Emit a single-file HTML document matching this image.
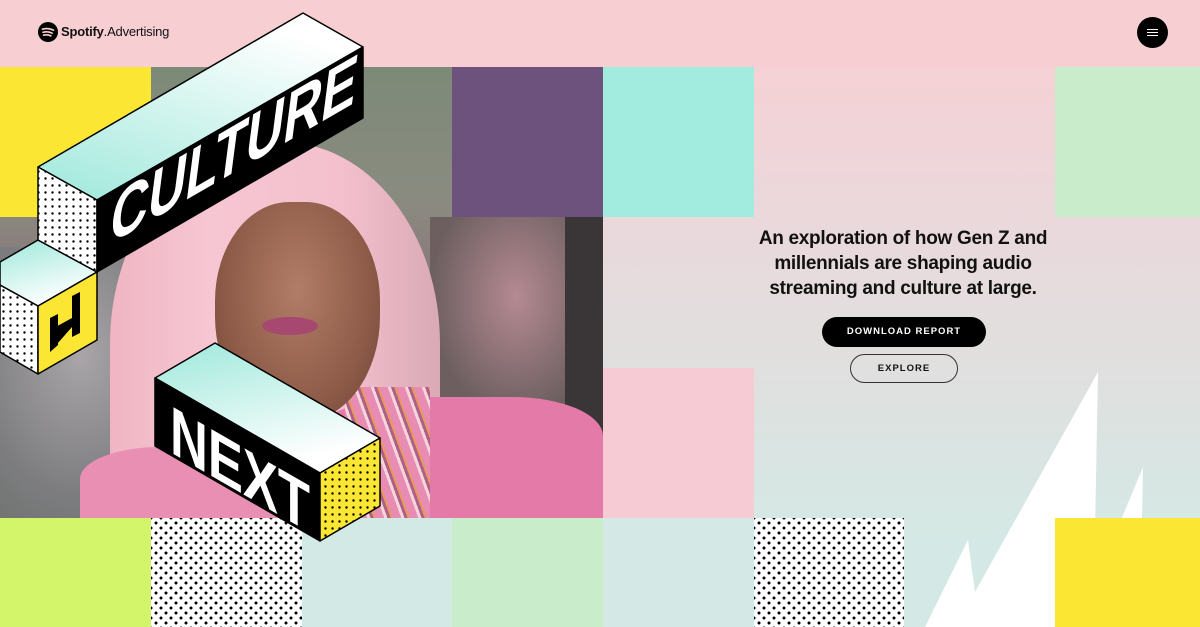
<!DOCTYPE html>
<html><head><meta charset="utf-8"><style>
*{margin:0;padding:0;box-sizing:border-box}
body{width:1200px;height:627px;overflow:hidden;position:relative;background:#f7cfd3;font-family:"Liberation Sans",sans-serif}
.a{position:absolute}
.dots{background-color:#fff;background-image:radial-gradient(circle,#000 1.3px,transparent 1.7px),radial-gradient(circle,#000 1.3px,transparent 1.7px);background-size:10px 10px;background-position:0 0,5px 5px}
h1{position:absolute;left:703px;top:226px;width:400px;text-align:center;font-size:19px;line-height:25px;font-weight:bold;color:#111;letter-spacing:-0.3px}
.btn{position:absolute;border-radius:16px;font-size:9.5px;font-weight:bold;letter-spacing:1px;text-align:center}
</style></head><body>
<div class="a" style="left:603px;top:67px;width:597px;height:560px;background:linear-gradient(#f5d1d5 0%,#e9d9dc 30%,#dfe0df 55%,#d4e9e5 85%)"></div>
<div class="a" style="left:0;top:67px;width:603px;height:451px;overflow:hidden;background:linear-gradient(#7d8a78 0%,#8a8b80 30%,#8a6e78 55%,#6f6a70 100%)">
 <div class="a" style="left:0;top:180px;width:200px;height:271px;background:radial-gradient(ellipse at 40% 40%,#a9a5a8,#7d7d80 60%,#6a7068)"></div>
 <div class="a" style="left:430px;top:150px;width:173px;height:200px;background:radial-gradient(ellipse at 50% 40%,#b58a92,#6d5f60 70%)"></div>
 <div class="a" style="left:565px;top:150px;width:38px;height:301px;background:#3a3637"></div>
 <div class="a" style="left:110px;top:75px;width:330px;height:420px;border-radius:48% 48% 10% 10%;background:linear-gradient(90deg,#f0b5c3,#f6c6d2 30%,#f4c0cd 70%,#d9a9b6)"></div>
 <div class="a" style="left:300px;top:330px;width:303px;height:130px;border-radius:40% 30% 0 0;background:#e47aa8"></div>
 <div class="a" style="left:80px;top:380px;width:200px;height:80px;border-radius:40% 40% 0 0;background:#e98fb4"></div>
 <div class="a" style="left:345px;top:320px;width:85px;height:140px;background:repeating-linear-gradient(70deg,#e98cb4 0 8px,#f5d6dd 8px 11px,#b06088 11px 14px,#e79a5d 14px 16px)"></div>
 <div class="a" style="left:215px;top:135px;width:165px;height:220px;border-radius:45% 45% 48% 48%;background:radial-gradient(ellipse at 50% 40%,#b17d68,#8f5c49 60%,#6e4435)"></div>
 <div class="a" style="left:262px;top:250px;width:56px;height:18px;border-radius:50%;background:#a6486f"></div>
</div>
<div class="a" style="left:0;top:67px;width:151px;height:150px;background:#fae633"></div>
<div class="a" style="left:452px;top:67px;width:151px;height:150px;background:#6c527c"></div>
<div class="a" style="left:603px;top:67px;width:151px;height:150px;background:#a2ebdf"></div>
<div class="a" style="left:1055px;top:67px;width:145px;height:150px;background:#c9ecca"></div>
<div class="a" style="left:603px;top:368px;width:151px;height:150px;background:#f7cbd3"></div>
<div class="a" style="left:0;top:518px;width:151px;height:109px;background:#d2f56a"></div>
<div class="a dots" style="left:151px;top:518px;width:151px;height:109px"></div>
<div class="a" style="left:302px;top:518px;width:150px;height:109px;background:#d3e9e5"></div>
<div class="a" style="left:452px;top:518px;width:151px;height:109px;background:#c9ecca"></div>
<div class="a" style="left:603px;top:518px;width:151px;height:109px;background:#d4e9e5"></div>
<div class="a dots" style="left:754px;top:518px;width:150px;height:109px"></div>
<svg class="a" style="left:0;top:0" width="1200" height="627">
 <polygon points="925,627 968,540 975,592 1098,372 1094,585 1143,467 1140,627" fill="#fff"/>
</svg>
<div class="a" style="left:1055px;top:518px;width:145px;height:109px;background:#fae633"></div>
<svg class="a" style="left:0;top:0" width="1200" height="627">
 <defs>
  <linearGradient id="m" x1="0" y1="1" x2="0.6" y2="0"><stop offset="0" stop-color="#9ee8db"/><stop offset="1" stop-color="#ffffff"/></linearGradient>
  <linearGradient id="m2" x1="0" y1="0" x2="0.4" y2="1"><stop offset="0" stop-color="#9ee8db"/><stop offset="1" stop-color="#ffffff"/></linearGradient>
  <pattern id="d" width="7" height="7" patternUnits="userSpaceOnUse"><rect width="7" height="7" fill="#fff"/><circle cx="3.5" cy="3.5" r="1.2" fill="#000"/></pattern>
  <pattern id="dy" width="7" height="7" patternUnits="userSpaceOnUse"><rect width="7" height="7" fill="#fae633"/><circle cx="3.5" cy="3.5" r="1.2" fill="#000"/></pattern>
 </defs>
 <g stroke="#000" stroke-width="1.5" stroke-linejoin="round">
  <polygon points="0,262 38,240 97,272 38,306 0,285" fill="url(#m2)"/>
  <polygon points="0,285 38,306 38,374 0,352" fill="url(#d)"/>
  <polygon points="38,306 97,272 97,340 38,374" fill="#fae633"/>
  <polygon points="38,167 303,13 363,47 97,200" fill="url(#m)"/>
  <polygon points="38,167 97,200 97,272 38,240" fill="url(#d)"/>
  <polygon points="97,200 363,47 363,118 97,272" fill="#000"/>
  <polygon points="155,378 215,343 380,438 320,473" fill="url(#m2)"/>
  <polygon points="155,378 320,473 320,541 155,446" fill="#000"/>
  <polygon points="320,473 380,438 380,506 320,541" fill="url(#dy)"/>
 </g>
 <polygon points="72,296 80,292 80,333 72,337" fill="#000"/>
 <polygon points="50,330 72,318 72,327 50,352" fill="#000"/>
 <polygon points="50,318 58,314 58,345 50,352" fill="#000"/>
 <text transform="translate(108,245) matrix(1,-0.577,0,1,0,0) skewX(-8)" font-family="Liberation Sans" font-weight="bold" font-size="68" fill="#fff" textLength="246" lengthAdjust="spacingAndGlyphs">CULTURE</text>
 <text transform="translate(170,452) matrix(1,0.577,0,1,0,0)" font-family="Liberation Sans" font-weight="bold" font-size="68" fill="#fff" textLength="140" lengthAdjust="spacingAndGlyphs">NEXT</text>
</svg>
<svg class="a" style="left:38px;top:22px" width="20" height="20" viewBox="0 0 20 20"><circle cx="10" cy="10" r="10" fill="#000"/><path d="M4.5 7.2c3.8-1.1 7.8-.8 11 1M5 10.3c3.2-.9 6.5-.6 9.2.9M5.5 13.2c2.6-.7 5.2-.4 7.4.7" stroke="#f7cfd3" stroke-width="1.6" fill="none" stroke-linecap="round"/></svg>
<div class="a" style="left:61px;top:24px;font-size:13px;color:#111;letter-spacing:-0.2px"><b>Spotify</b>.<span style="font-weight:normal">Advertising</span></div>
<div class="a" style="left:1137px;top:17px;width:31px;height:31px;border-radius:50%;background:#000"></div>
<div class="a" style="left:1147px;top:29px;width:11px;height:1px;background:#fff;box-shadow:0 3px 0 #fff,0 6px 0 #fff"></div>
<h1>An exploration of how Gen Z and<br>millennials are shaping audio<br>streaming and culture at large.</h1>
<div class="btn" style="left:822px;top:317px;width:164px;height:30px;background:#000;color:#fff;line-height:30px">DOWNLOAD REPORT</div>
<div class="btn" style="left:850px;top:354px;width:108px;height:29px;border:1px solid #333;color:#111;line-height:27px">EXPLORE</div>
</body></html>
